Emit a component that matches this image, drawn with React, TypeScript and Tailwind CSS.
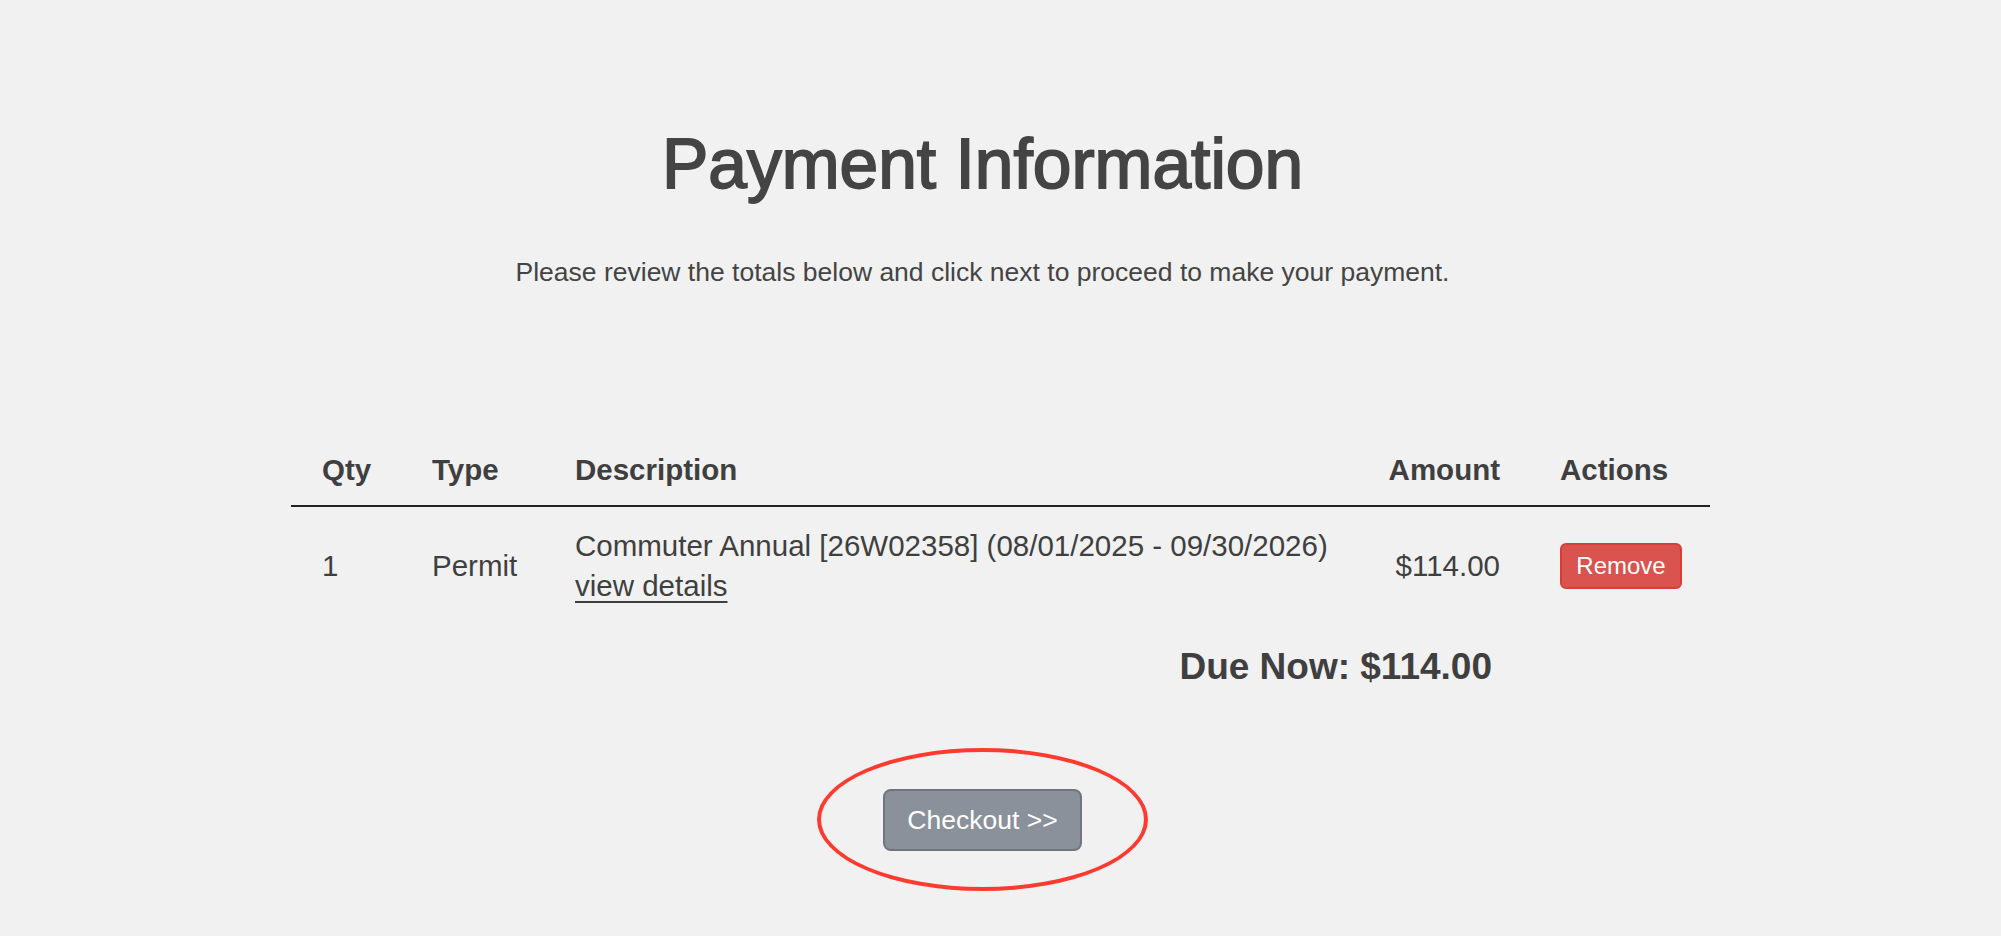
import * as React from "react";

const font = "font-['Liberation_Sans',Arial,sans-serif]";

export default function App() {
  return (
    <div className={`min-h-screen w-full bg-[#f1f1f1] text-[#444] ${font}`}>
      <div className="pt-[126px] pr-[36px] text-center">
        <h1 className="text-[69.5px] leading-[1.1] font-normal [-webkit-text-stroke:1.8px_#444]">
          Payment Information
        </h1>
        <p className="mt-[52px] text-[26.5px] leading-[37px]">
          Please review the totals below and click next to proceed to make your payment.
        </p>
      </div>

      <div className="mx-auto mt-[143px] w-[1419px] text-[29.5px] leading-[40px] text-[#3f3f3f]">
        <div className="grid grid-cols-[125px_143px_1fr_141px_194px] border-b-2 border-[#222] pt-4 pb-[15px] font-bold">
          <div className="pl-[31px]">Qty</div>
          <div className="pl-4">Type</div>
          <div className="pl-4">Description</div>
          <div className="pr-4 text-right">Amount</div>
          <div className="pl-[44px]">Actions</div>
        </div>

        <div className="grid grid-cols-[125px_143px_1fr_141px_194px] items-center pt-[19px] pb-4">
          <div className="pl-[31px]">1</div>
          <div className="pl-4">Permit</div>
          <div className="pl-4">
            <div>Commuter Annual [26W02358] (08/01/2025 - 09/30/2026)</div>
            <a href="#" className="underline decoration-2 underline-offset-[5px]">
              view details
            </a>
          </div>
          <div className="pr-4 text-right">$114.00</div>
          <div className="pl-[44px]">
            <button className="flex h-[46px] w-[122px] items-center justify-center rounded-[6px] border-2 border-[#d43f3a] bg-[#d9534f] text-[24px] leading-[36px] text-white">
              Remove
            </button>
          </div>
        </div>

        <div className="mt-[25px] pr-[218px] text-right text-[37px] leading-[40px] font-bold">
          Due Now: $114.00
        </div>
      </div>

      <div className="mt-[102px] flex justify-center pr-[36px] pb-[84px]">
        <div className="relative">
          <button className="flex h-[62px] w-[199px] items-center justify-center rounded-[8px] border-2 border-[#6f757d] bg-[#8b919a] text-[26.5px] text-white">
            Checkout &gt;&gt;
          </button>
          <div className="pointer-events-none absolute -top-[41px] -bottom-[40px] -left-[66px] -right-[66px] rounded-[50%] border-[4px] border-[#ff3b30]" />
        </div>
      </div>
    </div>
  );
}
